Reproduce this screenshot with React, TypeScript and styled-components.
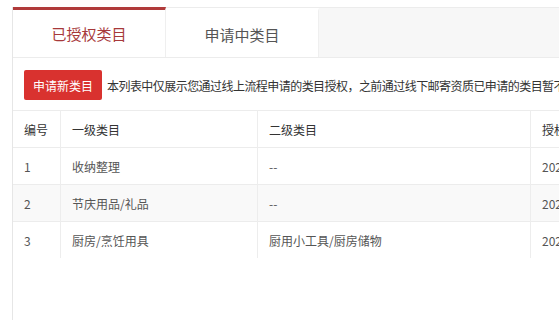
import React from 'react'
import styled, { createGlobalStyle } from 'styled-components'

const GlobalStyle = createGlobalStyle`
  html, body {
    margin: 0;
    padding: 0;
    background: #fff;
    overflow: hidden;
  }
  body {
    font-family: "Noto Sans CJK SC", "Microsoft YaHei", "Liberation Sans", sans-serif;
    color: #333;
  }
`

const Page = styled.div`
  padding: 7px 0 0 12px;
  width: 760px;
  height: 320px;
  box-sizing: border-box;
`

const Panel = styled.div`
  border-left: 1px solid #e6e6e6;
  height: 100%;
`

const TabBar = styled.div`
  display: flex;
  height: 51px;
  border-top: 1px solid #ececec;
  border-bottom: 1px solid #ececec;
  background: #f7f7f7;
  box-sizing: border-box;
`

const Tab = styled.div<{ $active?: boolean }>`
  width: 153px;
  display: flex;
  align-items: center;
  justify-content: center;
  background: #fff;
  font-size: 15px;
  color: ${({ $active }) => ($active ? '#a7393a' : '#555')};
  border-top: 3px solid ${({ $active }) => ($active ? '#b03a3a' : 'transparent')};
  margin-top: ${({ $active }) => ($active ? '-1px' : '0')};
  border-right: 1px solid #efefef;
  box-sizing: border-box;
`

const Toolbar = styled.div`
  display: flex;
  align-items: center;
  gap: 5px;
  padding: 12px 11px 10px;
`

const Button = styled.button`
  height: 30px;
  width: 78px;
  padding: 0;
  border: none;
  border-radius: 2px;
  background: #d9322f;
  color: #fff;
  font-family: inherit;
  font-size: 12px;
  flex-shrink: 0;
`

const Note = styled.span`
  font-size: 12px;
  color: #333;
  white-space: nowrap;
  letter-spacing: -0.55px;
`

const Table = styled.div`
  display: grid;
  grid-template-columns: 48px 197px 273px 160px;
  font-size: 12px;
`

const Row = styled.div<{ $stripe?: boolean }>`
  display: contents;
  & > div {
    background: ${({ $stripe }) => ($stripe ? '#f9f9f9' : '#fff')};
  }
`

const Cell = styled.div<{ $head?: boolean }>`
  height: 37px;
  display: flex;
  align-items: center;
  padding-left: 11px;
  color: ${({ $head }) => ($head ? '#333' : '#555')};
  border-top: 1px solid #ececec;
  border-right: 1px solid #ededed;
  box-sizing: border-box;
  white-space: nowrap;
  overflow: hidden;
`

const rows = [
  { id: '1', first: '收纳整理', second: '--', date: '2021-03-12' },
  { id: '2', first: '节庆用品/礼品', second: '--', date: '2021-03-12' },
  { id: '3', first: '厨房/烹饪用具', second: '厨用小工具/厨房储物', date: '2021-03-12' },
]

export default function App() {
  return (
    <>
      <GlobalStyle />
      <Page>
        <Panel>
          <TabBar>
            <Tab $active>已授权类目</Tab>
            <Tab>申请中类目</Tab>
          </TabBar>
          <Toolbar>
            <Button>申请新类目</Button>
            <Note>本列表中仅展示您通过线上流程申请的类目授权，之前通过线下邮寄资质已申请的类目暂不显示</Note>
          </Toolbar>
          <Table>
            <Row>
              <Cell $head>编号</Cell>
              <Cell $head>一级类目</Cell>
              <Cell $head>二级类目</Cell>
              <Cell $head>授权时间</Cell>
            </Row>
            {rows.map((r, i) => (
              <Row key={r.id} $stripe={i === 1}>
                <Cell>{r.id}</Cell>
                <Cell>{r.first}</Cell>
                <Cell>{r.second}</Cell>
                <Cell>{r.date}</Cell>
              </Row>
            ))}
          </Table>
        </Panel>
      </Page>
    </>
  )
}
